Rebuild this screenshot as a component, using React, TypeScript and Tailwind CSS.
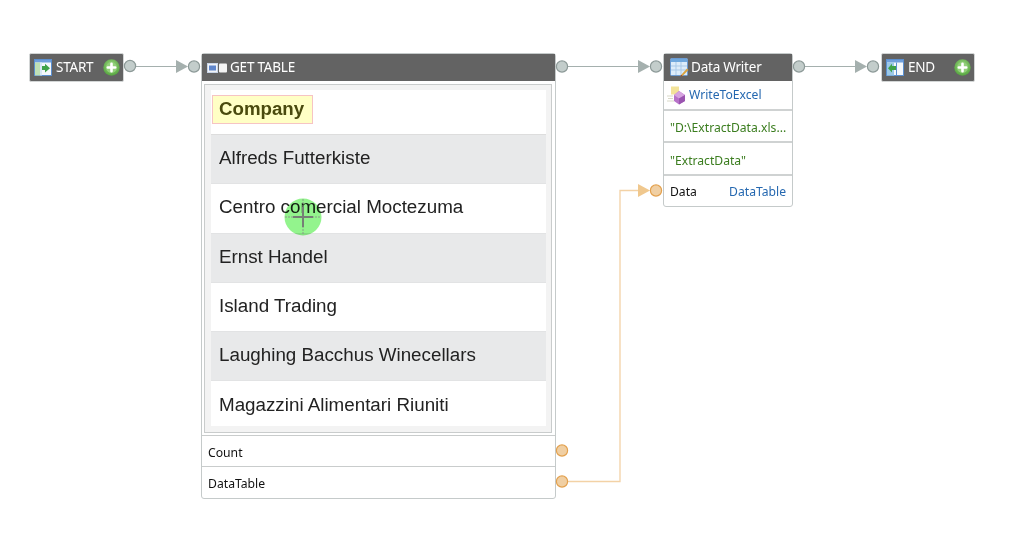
import React from "react";

const ui = "font-['Noto_Sans','Open_Sans',sans-serif]";
const head = "text-white text-[13.5px] tracking-[-0.22px]";

function Dot({ x, y, orange }: { x: number; y: number; orange?: boolean }) {
  return (
    <circle cx={x} cy={y} r={5.6} fill={orange ? "#f0cfa3" : "#c3cdcb"} stroke={orange ? "#e3a14e" : "#8d9a98"} strokeWidth={1.2} />
  );
}

function Connectors() {
  return (
    <svg width="1010" height="535" className="absolute left-0 top-0">
      <g stroke="#a5b0ae" strokeWidth="1.2" fill="none">
        <path d="M136 66.5H177" />
        <path d="M568 66.5H639" />
        <path d="M805 66.5H856" />
      </g>
      <g fill="#a5b0ae">
        <path d="M176 60L188 66.5L176 73Z" />
        <path d="M638 60L650 66.5L638 73Z" />
        <path d="M855 60L867 66.5L855 73Z" />
      </g>
      <path d="M568 481.5H620V190.5H639" stroke="#f3d2a6" strokeWidth="1.3" fill="none" />
      <path d="M638 184L650 190.5L638 197Z" fill="#f0c88e" />
      <Dot x={130} y={66} />
      <Dot x={194} y={66.5} />
      <Dot x={562} y={66.5} />
      <Dot x={656} y={66.5} />
      <Dot x={799} y={66.5} />
      <Dot x={873} y={66.5} />
      <Dot x={656} y={190.5} orange />
      <Dot x={562} y={450.5} orange />
      <Dot x={562} y={481.5} orange />
    </svg>
  );
}

function PlusButton({ id }: { id: string }) {
  return (
    <svg width="17" height="17" viewBox="0 0 17 17" className="shrink-0">
      <defs>
        <radialGradient id={id} cx="50%" cy="40%" r="60%">
          <stop offset="0%" stopColor="#a6dc8a" />
          <stop offset="100%" stopColor="#55a53f" />
        </radialGradient>
      </defs>
      <circle cx="8.5" cy="8.5" r="8.2" fill={`url(#${id})`} />
      <circle cx="8.5" cy="8.5" r="5.4" fill="#93cf7b" />
      <path d="M8.5 4.8V12.2M4.8 8.5H12.2" stroke="#fff" strokeWidth="2.6" strokeLinecap="round" />
    </svg>
  );
}

function FlowIcon({ end }: { end?: boolean }) {
  return (
    <svg width="18" height="17" viewBox="0 0 18 17" className="shrink-0">
      <rect x="0.5" y="0.5" width="17" height="16" fill="#f4f8fc" stroke="#5b8fcf" />
      <rect x="1" y="1" width="16" height="2.5" fill="#6f9fdc" />
      {end ? (
        <>
          <rect x="1" y="3.5" width="7" height="13" fill="#9cc9e8" />
          <path d="M10 7H6V4.8L2 9.2L6 13.5V11H10Z" fill="#3fa34a" />
          <rect x="10" y="3.5" width="1" height="13" fill="#5b8fcf" />
        </>
      ) : (
        <>
          <rect x="1" y="3.5" width="5" height="13" fill="#bfe0b5" />
          <rect x="6" y="3.5" width="2" height="13" fill="#d8e8f5" />
          <path d="M8 7H11V4.8L16 9.2L11 13.5V11H8Z" fill="#3fa34a" />
        </>
      )}
    </svg>
  );
}

function CapNode({ left, width, label, end }: { left: string; width: string; label: string; end?: boolean }) {
  return (
    <div className={`absolute top-[53px] ${left} ${width} h-[29px] rounded-[2px] border border-[#d3d6d6] bg-[#636363] flex items-center pl-[4px] pr-[3px] gap-[4px] ${head} ${ui}`}>
      <FlowIcon end={end} />
      <span className="flex-1 leading-none">{label}</span>
      <PlusButton id={end ? "pg-end" : "pg-start"} />
    </div>
  );
}

const rows = ["Alfreds Futterkiste", "Centro comercial Moctezuma", "Ernst Handel", "Island Trading", "Laughing Bacchus Winecellars", "Magazzini Alimentari Riuniti"];

function GetTable() {
  return (
    <div className={`absolute left-[201px] top-[53px] w-[355px] h-[446px] rounded-[3px] border border-[#c5caca] bg-white flex flex-col ${ui}`}>
      <div className={`h-[27px] bg-[#636363] flex items-center pl-[5px] gap-[3px] ${head}`}>
        <svg width="20" height="10" viewBox="0 0 20 10" className="shrink-0">
          <rect x="0.5" y="0.5" width="10" height="9" fill="#f2f4f8" stroke="#c8d4e6" />
          <rect x="2" y="2.5" width="7" height="5" fill="#5f86cc" />
          <rect x="12" y="0.5" width="8" height="9" rx="1" fill="#f4f4f4" />
        </svg>
        <span className="leading-none">GET TABLE</span>
      </div>
      <div className="ml-[2px] mr-[3px] mt-[3px] h-[349px] border border-[#c9cccc] bg-[#f3f3f3] pl-[6px] pr-[5px] pt-[5px] pb-[6px] font-['Liberation_Sans',Arial,sans-serif]">
        <div className="h-[336px] overflow-hidden">
          <div className="h-[45px] bg-white pl-px pt-[5px] border-b border-[#dddddd]">
            <span className="h-[29px] w-[101px] pl-[6px] flex items-center border border-[#f6c4c4] bg-[#ffffc5] text-[#4a4a0e] text-[18.7px] font-bold leading-none">Company</span>
          </div>
          {rows.map((r, i) => (
            <div key={r} className={`h-[49.3px] shrink-0 flex items-center pl-[8px] pb-[2px] text-[18.8px] text-[#222222] border-b border-[#e2e3e4] ${i % 2 === 0 ? "bg-[#e8e9ea]" : "bg-white"}`}>
              {r}
            </div>
          ))}
        </div>
      </div>
      <div className="mt-[2px] border-t border-[#c9cccc] h-[31px] flex items-center pl-[6px] pt-[4px] text-[12.2px] text-[#111111]">Count</div>
      <div className="border-t border-[#c9cccc] flex-1 flex items-center pl-[6px] pt-[3px] text-[12.2px] text-[#111111]">DataTable</div>
    </div>
  );
}

function WriterRow({ children, h, last }: { children: React.ReactNode; h: string; last?: boolean }) {
  return (
    <div className={`${h} flex items-center px-[6px] text-[12.15px] ${last ? "" : "border-b-2 border-[#cfd2d2]"}`}>{children}</div>
  );
}

function DataWriter() {
  return (
    <div className={`absolute left-[663px] top-[53px] w-[130px] h-[154px] rounded-[3px] border border-[#c5caca] bg-white flex flex-col ${ui}`}>
      <div className={`h-[27px] bg-[#636363] flex items-center pl-[6px] gap-[2px] ${head}`}>
        <svg width="19" height="19" viewBox="0 0 19 19" className="shrink-0">
          <rect x="0.5" y="0.5" width="17" height="17" rx="1" fill="#dcecfa" stroke="#6c9bd2" />
          <rect x="1" y="1" width="16" height="3" fill="#6fa8de" />
          <path d="M6 4V17M11 4V17M1 8H17M1 12H17" stroke="#a9c9e8" />
          <path d="M11 17L17 10.5L18.5 12L12.5 18L10.5 18.5Z" fill="#d9a23e" />
          <path d="M10.5 18.5L11 17L12.5 18Z" fill="#7a2a2a" />
        </svg>
        <span className="leading-none">Data Writer</span>
      </div>
      <WriterRow h="h-[30px]">
        <svg width="19" height="19" viewBox="0 0 19 19" className="shrink-0 -ml-[3px] mr-[3px]">
          <rect x="4" y="0.5" width="8" height="8" fill="#f3e39a" />
          <path d="M0 10H6M1 12.5H6M0 15H7" stroke="#d9d9c8" />
          <path d="M12 5L18 9V15L12 18.5L7 15V9Z" fill="#b772c9" />
          <path d="M7 9L12 12.5L18 9L12 5Z" fill="#d6a4e0" />
          <path d="M12 12.5V18.5L18 15V9Z" fill="#9a55b0" />
        </svg>
        <span className="text-[#2568b0]">WriteToExcel</span>
      </WriterRow>
      <WriterRow h="h-[32px] pt-[4px]"><span className="text-[#3b7d1f] whitespace-nowrap">"D:\ExtractData.xls...</span></WriterRow>
      <WriterRow h="h-[33px] pt-[5px]"><span className="text-[#3b7d1f]">"ExtractData"</span></WriterRow>
      <WriterRow h="flex-1 pt-[3px]" last>
        <span className="text-[#111111] flex-1">Data</span>
        <span className="text-[#2568b0]">DataTable</span>
      </WriterRow>
    </div>
  );
}

function Cursor() {
  return (
    <svg width="40" height="40" viewBox="0 0 40 40" className="absolute left-[283px] top-[197px]">
      <circle cx="20" cy="20" r="18.5" fill="#93f48d" style={{ mixBlendMode: "multiply" }} />
      <path d="M20 2V38M2 20H38" stroke="#8a9a8a" strokeWidth="1" strokeDasharray="2 1" />
      <path d="M20 10V30M10 20H30" stroke="#767f76" strokeWidth="2" />
    </svg>
  );
}

export default function App() {
  return (
    <div className="relative w-[1010px] h-[535px] bg-white overflow-hidden">
      <CapNode left="left-[29px]" width="w-[95px]" label="START" />
      <GetTable />
      <DataWriter />
      <CapNode left="left-[881px]" width="w-[94px]" label="END" end />
      <Connectors />
      <Cursor />
    </div>
  );
}
